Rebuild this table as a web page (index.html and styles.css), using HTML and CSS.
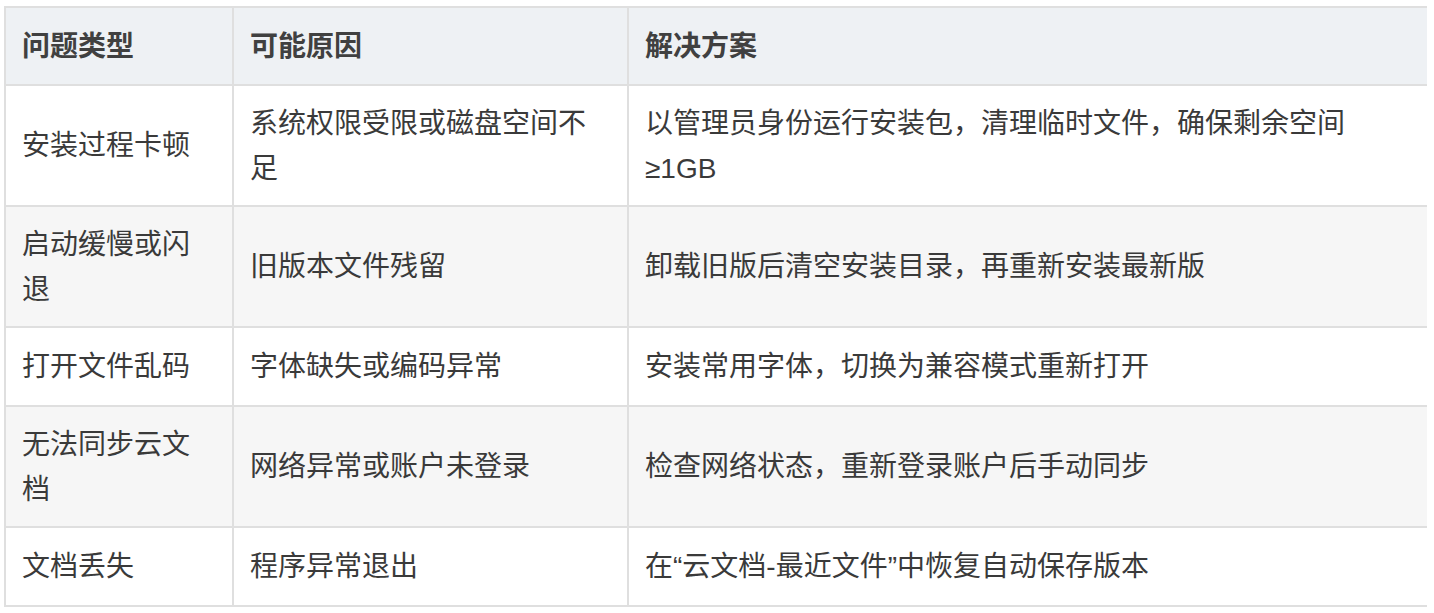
FILE: index.html
```html
<!DOCTYPE html>
<html lang="zh-CN">
<head>
<meta charset="utf-8">
<title>常见问题</title>
<link rel="stylesheet" href="styles.css">
</head>
<body>
<table class="faq">
  <colgroup>
    <col class="c1">
    <col class="c2">
    <col class="c3">
  </colgroup>
  <thead>
    <tr><th>问题类型</th><th>可能原因</th><th>解决方案</th></tr>
  </thead>
  <tbody>
    <tr><td>安装过程卡顿</td><td>系统权限受限或磁盘空间不足</td><td>以管理员身份运行安装包，清理临时文件，确保剩余空间≥1GB</td></tr>
    <tr><td>启动缓慢或闪退</td><td>旧版本文件残留</td><td>卸载旧版后清空安装目录，再重新安装最新版</td></tr>
    <tr><td>打开文件乱码</td><td>字体缺失或编码异常</td><td>安装常用字体，切换为兼容模式重新打开</td></tr>
    <tr><td>无法同步云文档</td><td>网络异常或账户未登录</td><td>检查网络状态，重新登录账户后手动同步</td></tr>
    <tr><td>文档丢失</td><td>程序异常退出</td><td>在“云文档-最近文件”中恢复自动保存版本</td></tr>
  </tbody>
</table>
</body>
</html>
```
FILE: styles.css
```css
html, body {
  background: #ffffff;
}
body {
  margin: 6px 7px 0 4px;
  font-family: "Liberation Sans", "Noto Sans CJK SC", sans-serif;
  font-size: 28px;
  color: #3a3a3a;
}
.faq {
  border-collapse: collapse;
  table-layout: fixed;
  width: 1423px;
}
.faq col.c1 { width: 228px; }
.faq col.c2 { width: 395px; }
.faq col.c3 { width: 800px; }
.faq th,
.faq td {
  border: 2px solid #dfdfdf;
  padding: 14.5px 16px;
  line-height: 45px;
  text-align: left;
  vertical-align: middle;
}
.faq td {
  height: 48px;
}
.faq th {
  background: #eef1f4;
  font-weight: bold;
  color: #404040;
  padding-top: 16px;
  padding-bottom: 15px;
}
.faq tbody tr:nth-child(even) td {
  background: #f6f6f6;
}
```
